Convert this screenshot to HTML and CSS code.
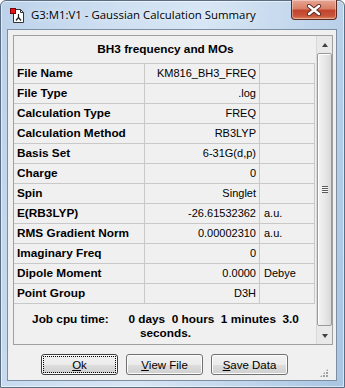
FILE: index.html
```html
<!DOCTYPE html>
<html>
<head>
<meta charset="utf-8">
<link rel="stylesheet" href="styles.css">
</head>
<body>
<div class="window">
  <div class="titlebar">
    <svg class="appicon" width="16" height="16" viewBox="0 0 16 16">
      <path d="M3.5 1.5 H10.5 L13.5 4.5 V14.5 H3.5 Z" fill="#fff" stroke="#333" stroke-width="1"/>
      <path d="M10.5 1.5 V4.5 H13.5" fill="none" stroke="#333" stroke-width="1"/>
      <path d="M8.5 6 V9.5 L6 12.5 M8.5 9.5 L11 12.5" fill="none" stroke="#222" stroke-width="1.2"/>
      <rect x="0.5" y="0.5" width="5" height="5" fill="#e8101a" stroke="#7a0000" stroke-width="1"/>
    </svg>
    <span class="title">G3:M1:V1 - Gaussian Calculation Summary</span>
    <div class="close">
      <svg width="18" height="12" viewBox="0 0 18 12">
        <path d="M4 2 L14 10 M14 2 L4 10" stroke="#5a2a22" stroke-width="4.2" stroke-linecap="round"/>
        <path d="M4 2 L14 10 M14 2 L4 10" stroke="#fff" stroke-width="2.4" stroke-linecap="round"/>
      </svg>
    </div>
  </div>
  <div class="client">
    <div class="panel">
      <div class="content">
        <div class="heading">BH3 frequency and MOs</div>
        <div class="grid">
          <div class="row"><div class="lab">File Name</div><div class="val">KM816_BH3_FREQ</div><div class="unit"></div></div>
          <div class="row"><div class="lab">File Type</div><div class="val">.log</div><div class="unit"></div></div>
          <div class="row"><div class="lab">Calculation Type</div><div class="val">FREQ</div><div class="unit"></div></div>
          <div class="row"><div class="lab">Calculation Method</div><div class="val">RB3LYP</div><div class="unit"></div></div>
          <div class="row"><div class="lab">Basis Set</div><div class="val">6-31G(d,p)</div><div class="unit"></div></div>
          <div class="row"><div class="lab">Charge</div><div class="val">0</div><div class="unit"></div></div>
          <div class="row"><div class="lab">Spin</div><div class="val">Singlet</div><div class="unit"></div></div>
          <div class="row"><div class="lab">E(RB3LYP)</div><div class="val">-26.61532362</div><div class="unit">a.u.</div></div>
          <div class="row"><div class="lab">RMS Gradient Norm</div><div class="val">0.00002310</div><div class="unit">a.u.</div></div>
          <div class="row"><div class="lab">Imaginary Freq</div><div class="val">0</div><div class="unit"></div></div>
          <div class="row"><div class="lab">Dipole Moment</div><div class="val">0.0000</div><div class="unit">Debye</div></div>
          <div class="row last"><div class="lab">Point Group</div><div class="val">D3H</div><div class="unit"></div></div>
        </div>
        <div class="cpu">Job cpu time:      0 days  0 hours  1 minutes  3.0<br>seconds.</div>
      </div>
      <div class="scrollbar">
        <div class="sbtn"><span class="tri up"></span></div>
        <div class="track">
          <div class="thumb"><span class="grip"></span></div>
        </div>
        <div class="sbtn"><span class="tri down"></span></div>
      </div>
    </div>
    <div class="buttons">
      <button class="btn default"><span class="focus"><u>O</u>k</span></button>
      <button class="btn"><u>V</u>iew File</button>
      <button class="btn"><u>S</u>ave Data</button>
      <span class="sizegrip"></span>
    </div>
  </div>
</div>
</body>
</html>
```

FILE: styles.css
```css
* { box-sizing: border-box; }
html, body { margin: 0; padding: 0; }
body {
  width: 345px;
  height: 388px;
  overflow: hidden;
  background: #ffffff;
  font-family: "Liberation Sans", Arial, sans-serif;
}
.window {
  width: 345px;
  height: 388px;
  border: 1px solid #5a6d82;
  border-radius: 6px 6px 0 0;
  background: linear-gradient(100deg, #bcd2ea 0%, #cfe0f2 30%, #d7e6f4 50%, #c4d8ed 72%, #a8c5e2 100%);
  display: flex;
  flex-direction: column;
  box-shadow: inset 0 0 0 1px rgba(255,255,255,0.55);
}
.titlebar {
  height: 28px;
  flex: none;
  display: flex;
  align-items: flex-start;
  position: relative;
}
.appicon {
  margin: 7px 0 0 9px;
  flex: none;
}
.title {
  margin: 6px 0 0 5px;
  font-family: "Open Sans", "Noto Sans", sans-serif;
  font-size: 11.4px;
  color: #000;
  line-height: 16px;
  text-shadow: 0 0 6px rgba(255,255,255,0.9);
}
.close {
  position: absolute;
  top: -1px;
  right: 7px;
  width: 46px;
  height: 20px;
  border: 1px solid #5c2a22;
  border-top: none;
  border-radius: 0 0 4px 4px;
  background: linear-gradient(#e7a694 0%, #d98068 45%, #c2442c 55%, #c9563c 85%, #dd8a60 100%);
  box-shadow: inset 0 0 0 1px rgba(255,255,255,0.35);
  display: flex;
  align-items: center;
  justify-content: center;
}
.client {
  margin: 0 7px 6px 6px;
  flex: 1;
  border: 1px solid #7d8ea2;
  background: #f0f0f0;
  display: flex;
  flex-direction: column;
  padding: 5px 4px 0 5px;
}
.panel {
  width: 320px;
  height: 310px;
  border: 1px solid #a0a0a0;
  background: #f0f0f0;
  display: flex;
}
.content {
  width: 301px;
  margin-right: 1px;
  display: flex;
  flex-direction: column;
  font-size: 11px;
  color: #000;
}
.heading {
  height: 27px;
  font-weight: bold;
  font-size: 11.8px;
  text-align: center;
  line-height: 27px;
  padding-left: 2px;
}
.grid {
  border-top: 1px solid #c8c8c8;
}
.row {
  display: flex;
  height: 20px;
  border-bottom: 1px solid #c8c8c8;
  line-height: 19px;
}
.lab {
  width: 131px;
  border-right: 1px solid #c8c8c8;
  font-weight: bold;
  font-size: 11.8px;
  padding-left: 3px;
  white-space: nowrap;
}
.val {
  width: 115px;
  border-right: 1px solid #c8c8c8;
  text-align: right;
  padding-right: 3px;
  white-space: nowrap;
}
.unit {
  width: 55px;
  border-right: 1px solid #c8c8c8;
  padding-left: 4px;
  white-space: nowrap;
}
.cpu {
  font-weight: bold;
  font-size: 11.8px;
  text-align: center;
  white-space: pre;
  line-height: 14px;
  padding-top: 8px;
  padding-left: 2px;
}
.scrollbar {
  width: 16px;
  border-left: 1px solid #d8d8d8;
  display: flex;
  flex-direction: column;
  background: #e9e9e9;
}
.sbtn {
  height: 17px;
  flex: none;
  display: flex;
  align-items: center;
  justify-content: center;
}
.tri {
  width: 0;
  height: 0;
  border-left: 3.5px solid transparent;
  border-right: 3.5px solid transparent;
}
.tri.up { border-bottom: 4px solid #404040; }
.tri.down { border-top: 4px solid #404040; }
.track {
  flex: 1;
  padding: 0 0 1px 0;
  display: flex;
}
.thumb {
  flex: 1;
  border: 1px solid #9a9a9a;
  border-radius: 2px;
  background: linear-gradient(to right, #f3f3f3, #e8e8e8 50%, #d9d9d9);
  box-shadow: inset 1px 1px 0 #ffffff;
  display: flex;
  align-items: center;
  justify-content: center;
}
.grip {
  width: 6px;
  height: 7px;
  background: repeating-linear-gradient(#5a5a5a 0 1px, #f8f8f8 1px 2px);
}
.buttons {
  position: relative;
  display: flex;
  gap: 8px;
  padding: 9px 0 0 28px;
  flex: 1;
}
.btn {
  width: 77px;
  height: 21px;
  padding: 0;
  font-family: "Liberation Sans", Arial, sans-serif;
  font-size: 11.5px;
  color: #000;
  border: 1px solid #707070;
  border-radius: 3px;
  background: linear-gradient(#f2f2f2 0%, #ebebeb 50%, #dddddd 51%, #cfcfcf 100%);
  box-shadow: inset 0 0 0 1px #fcfcfc;
  display: flex;
  align-items: center;
  justify-content: center;
}
.btn.default {
  border-color: #3c3c3c;
}
.focus {
  display: flex;
  align-items: center;
  justify-content: center;
  width: 71px;
  height: 15px;
  outline: 1px dotted #000;
}
.sizegrip {
  position: absolute;
  right: 4px;
  bottom: 3px;
  width: 8px;
  height: 8px;
  background:
    radial-gradient(circle at 1px 1px, #a0a0a0 0.8px, transparent 1px) 0 0 / 3px 3px;
  clip-path: polygon(100% 0, 100% 100%, 0 100%);
}
```
